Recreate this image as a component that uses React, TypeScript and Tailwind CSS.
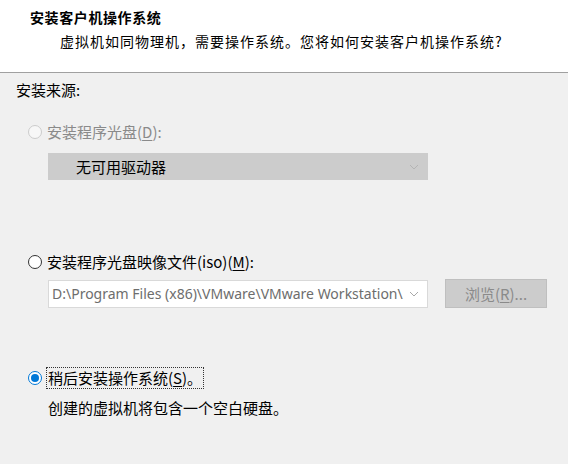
import React from 'react';

const cjk = { fontFamily: '"Noto Sans CJK SC", "Noto Sans", sans-serif' };

type RadioProps = {
  state: 'disabled' | 'normal' | 'checked';
};

const Radio: React.FC<RadioProps> = ({ state }) => {
  if (state === 'checked') {
    return (
      <span className="flex h-[14px] w-[14px] items-center justify-center rounded-full border border-[#0078d7] bg-white">
        <span className="h-[8px] w-[8px] rounded-full bg-[#0078d7]" />
      </span>
    );
  }
  return (
    <span
      className={
        state === 'disabled'
          ? 'h-[14px] w-[14px] rounded-full border border-[#cccccc] bg-[#f7f7f7]'
          : 'h-[14px] w-[14px] rounded-full border border-[#333333] bg-white'
      }
    />
  );
};

const Chevron: React.FC<{ color: string }> = ({ color }) => (
  <svg width="10" height="6" viewBox="0 0 10 6" className="shrink-0">
    <polyline points="1,1 5,5 9,1" fill="none" stroke={color} strokeWidth="1" />
  </svg>
);

export default function App() {
  return (
    <div className="flex h-[464px] w-[568px] flex-col overflow-hidden bg-[#f0f0f0]" style={cjk}>
      <header className="h-[73px] shrink-0 border-b border-[#a0a0a0] bg-white pl-[30px] pt-[7px]">
        <h1 className="text-[14px] font-bold leading-[20px] tracking-[0.6px] text-black">安装客户机操作系统</h1>
        <p className="mt-[4px] pl-[30px] text-[14px] leading-[20px] tracking-[1px] text-black">
          虚拟机如同物理机，需要操作系统。您将如何安装客户机操作系统?
        </p>
      </header>

      <main className="flex flex-col pl-[16px] text-[15px] leading-[20px]">
        <div className="mt-[7px] text-black">安装来源:</div>

        <label className="mt-[22px] flex items-center gap-[5px] pl-[12px] text-[#8a8a8a]">
          <Radio state="disabled" />
          <span>
            安装程序光盘(<span className="underline underline-offset-2">D</span>):
          </span>
        </label>

        <div className="ml-[32px] mt-[11px] flex h-[27px] w-[380px] items-center justify-between border border-[#cccccc] bg-[#cccccc] pl-[27px] pr-[8px] text-black">
          <span>无可用驱动器</span>
          <Chevron color="#b4b4b4" />
        </div>

        <label className="mt-[72px] flex items-center gap-[5px] pl-[12px] text-black">
          <Radio state="normal" />
          <span>
            安装程序光盘映像文件(iso)(<span className="underline underline-offset-2">M</span>):
          </span>
        </label>

        <div className="ml-[32px] mt-[7px] flex items-center">
          <div className="flex h-[28px] w-[380px] items-center justify-between border border-[#d9d9d9] bg-white pl-[3px] pr-[8px] text-[#6d6d6d]">
            <span
              className="w-[352px] overflow-hidden whitespace-nowrap text-[14px]"
              style={{ fontFamily: '"Noto Sans", "Noto Sans CJK SC", sans-serif' }}
            >
              D:\Program Files (x86)\VMware\VMware Workstation\
            </span>
            <Chevron color="#a8a8a8" />
          </div>
          <button className="ml-[17px] flex h-[29px] w-[102px] items-center justify-center border border-[#bfbfbf] bg-[#cccccc] text-[#8a8a8a]">
            浏览(<span className="underline underline-offset-2">R</span>)...
          </button>
        </div>

        <label className="mt-[59px] flex items-center gap-[4px] pl-[12px] text-black">
          <Radio state="checked" />
          <span className="border border-dotted border-[#333333] px-[1px]">
            稍后安装操作系统(<span className="underline underline-offset-2">S</span>)。
          </span>
        </label>

        <p className="ml-[32px] mt-[9px] text-black">创建的虚拟机将包含一个空白硬盘。</p>
      </main>
    </div>
  );
}
